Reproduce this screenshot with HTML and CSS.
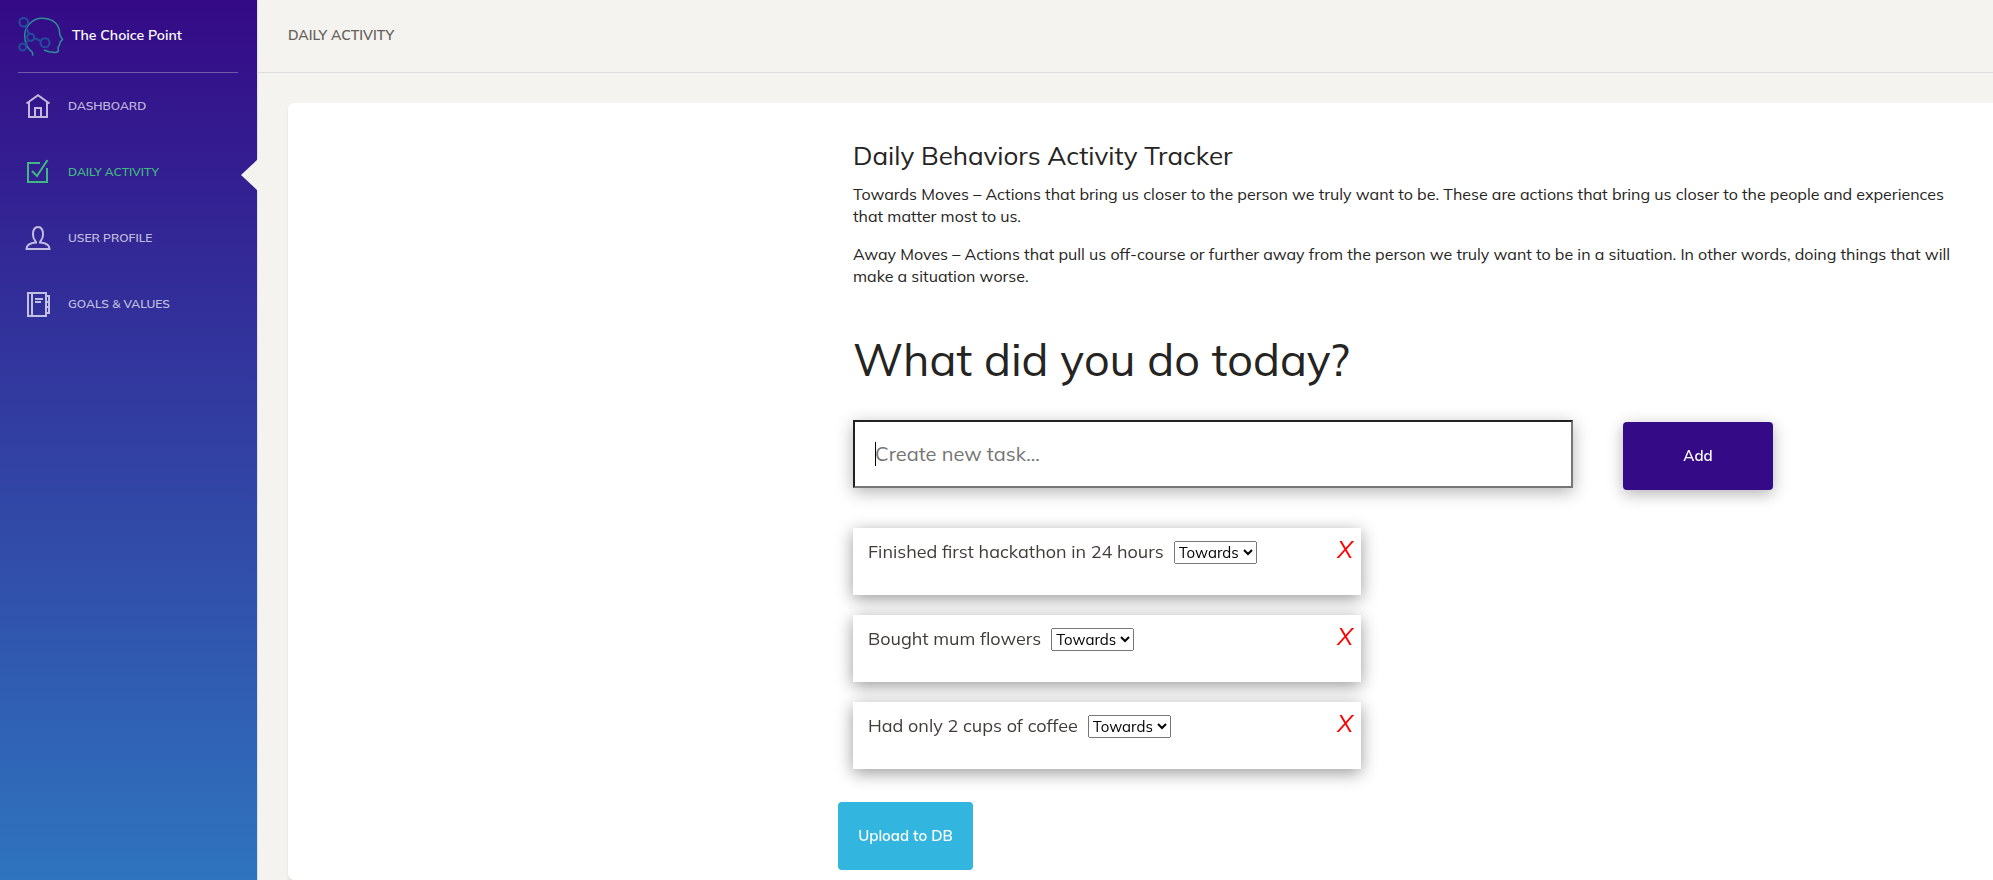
FILE: index.html
```html
<!DOCTYPE html>
<html lang="en">
<head>
  <meta charset="UTF-8" />
  <meta name="viewport" content="width=device-width, initial-scale=1.0" />
  <title>The Choice Point</title>
  <link rel="stylesheet" href="styles.css">
</head>
<body>
  <div class="wrapper">

    <aside class="sidebar">
      <a href="#" class="logo">
        <svg class="logo-img" viewBox="0 0 46 40" fill="none">
          <path stroke="#2b8f94" stroke-width="1.5" d="M14.700 39.700L14.500 36.500L11.500 33.500C8 30 6.700 24 6.700 18.700C7 10 15 2.300 23.700 2.300C32 2.300 39 6 41.300 13.700L41.700 18.700L44.500 23.700L42.300 25.700L41.500 29.300L40 31.300L40.300 34.500C40 36 39 36.500 37 36.400L31 35.700L26 34" />
          <g stroke="#234e9d" stroke-width="2">
            <circle cx="5.700" cy="6.300" r="4.300" />
            <circle cx="12.700" cy="21.300" r="3.500" />
            <circle cx="4.700" cy="31" r="3.500" />
            <circle cx="27" cy="26.700" r="4.500" />
            <path d="M7.500 10l3.500 8M10.500 24l-3.500 4.500M16 22l7 3" />
          </g>
        </svg>
        <span>The Choice Point</span>
      </a>
      <ul class="nav">
        <li><a href="#">
          <svg class="icon" viewBox="0 0 26 26"><path d="M1.500 10.500L13 2.300l11.500 8.200M4 9v15h18V9M10 24v-9h6v9" /></svg>
          Dashboard</a></li>
        <li class="active"><a href="#">
          <svg class="icon" viewBox="0 0 26 26"><path d="M15 4H3v19h19V9M7 12l5 5L22.500 1" /></svg>
          Daily Activity</a></li>
        <li><a href="#">
          <svg class="icon" viewBox="0 0 26 26"><path d="M11 17.500c0-2-3-2-3-8C8 4 10 2 13 2s5 2 5 7.500c0 6-3 6-3 8 6 .5 9.500 2.500 9.500 6.500H1.500c0-4 3.500-6 9.500-6.500z" /></svg>
          User Profile</a></li>
        <li><a href="#">
          <svg class="icon" viewBox="0 0 26 26"><path d="M3 2h18v23H3zM7 2v23M21 5h3v17h-3M10 8h8M10 11h6M22 11h2M22 16h2" /></svg>
          Goals &amp; Values</a></li>
      </ul>
    </aside>

    <div class="main-panel">
      <header class="navbar">
        <a href="#" class="navbar-brand">Daily Activity</a>
      </header>

      <main class="content">
        <section class="card">
          <h2 class="card-title">Daily Behaviors Activity Tracker</h2>
          <p class="card-text">Towards Moves – Actions that bring us closer to the person we truly want to be. These are actions that bring us closer to the people and experiences that matter most to us.</p>
          <p class="card-text">Away Moves – Actions that pull us off-course or further away from the person we truly want to be in a situation. In other words, doing things that will make a situation worse.</p>

          <h1 class="question">What did you do today?</h1>

          <form class="task-form">
            <input class="task-input" type="text" placeholder="Create new task..." aria-label="New task" autofocus>
            <button class="btn btn-add" type="button">Add</button>
          </form>

          <ul class="tasks">
            <li class="task">
              <label for="move1">Finished first hackathon in 24 hours</label>
              <select id="move1"><option>Towards</option><option>Away</option></select>
              <button class="delete" type="button">X</button>
            </li>
            <li class="task">
              <label for="move2">Bought mum flowers</label>
              <select id="move2"><option>Towards</option><option>Away</option></select>
              <button class="delete" type="button">X</button>
            </li>
            <li class="task">
              <label for="move3">Had only 2 cups of coffee</label>
              <select id="move3"><option>Towards</option><option>Away</option></select>
              <button class="delete" type="button">X</button>
            </li>
          </ul>

          <button class="btn btn-upload" type="button">Upload to DB</button>
        </section>
      </main>
    </div>

  </div>
</body>
</html>
```
FILE: styles.css
```css
* {
  box-sizing: border-box;
}

body {
  margin: 0;
  background-color: #f4f3ef;
  color: #252422;
  font-family: Mulish, Muli, Lato, sans-serif;
  font-size: 16px;
  line-height: 22px;
}

a {
  color: inherit;
  text-decoration: none;
}

ul {
  list-style: none;
  margin: 0;
  padding: 0;
}

.wrapper {
  display: flex;
  min-height: 100vh;
}

/* Sidebar */
.sidebar {
  flex: 0 0 258px;
  background: linear-gradient(#340a86, #2f74be);
  border-right: 1px solid #ddd;
  color: white;
}

.logo {
  display: flex;
  align-items: center;
  gap: 8px;
  height: 73px;
  margin: 0 19px 0 18px;
  border-bottom: 1px solid rgba(255, 255, 255, 0.3);
  font-size: 14px;
  font-weight: 600;
  line-height: 20px;
}

.logo span {
  padding-bottom: 2px;
}

.logo-img {
  width: 46px;
  height: 40px;
}

.nav a {
  display: flex;
  align-items: center;
  gap: 17px;
  height: 66px;
  padding-left: 25px;
  color: rgba(255, 255, 255, 0.7);
  font-size: 12px;
  font-weight: 600;
  text-transform: uppercase;
}

.nav .active {
  position: relative;
}

.nav .active a {
  color: #41b883;
}

/* arrow pointing at the open page */
.nav .active::after {
  content: "";
  position: absolute;
  right: -1px;
  top: 20px;
  border: solid transparent;
  border-width: 16px 17px 16px 0;
  border-right-color: #f4f3ef;
}

.icon {
  width: 26px;
  height: 26px;
  fill: none;
  stroke: currentColor;
  stroke-width: 2;
}

/* Main panel */
.main-panel {
  flex: 1;
  min-width: 0;
}

.navbar {
  display: flex;
  align-items: center;
  height: 73px;
  padding: 0 30px 2px;
  border-bottom: 1px solid #ddd;
}

.navbar-brand {
  color: #66615b;
  font-size: 14px;
  font-weight: 600;
  text-transform: uppercase;
}

.content {
  padding: 30px 0 0 30px;
}

.card {
  padding: 35px 36px 10px 565px;
  background: white;
  border-radius: 6px 0 0 6px;
  box-shadow: 0 2px 2px rgba(204, 197, 185, 0.5);
}

.card-title {
  margin: 0 0 9px;
  font-size: 26px;
  font-weight: 400;
  line-height: 36px;
}

.card-text {
  margin: 0 0 16px;
}

.question {
  margin: 42px 0 31px;
  font-size: 45px;
  font-weight: 400;
  line-height: 60px;
}

.task-form {
  display: flex;
  gap: 50px;
}

.task-input {
  width: 720px;
  height: 68px;
  padding: 0 20px 2px;
  border: 2px inset #767676;
  box-shadow: 0 4px 16px rgba(0, 0, 0, 0.3);
  font: inherit;
  font-size: 20px;
  caret-color: transparent;
  outline: none;
}

/* steady caret while the box is empty */
.task-input:placeholder-shown {
  background: linear-gradient(black, black) 20px 20px / 1px 24px no-repeat white;
}

.btn {
  height: 68px;
  border: none;
  border-radius: 4px;
  color: white;
  font: inherit;
  font-size: 15px;
  font-weight: 600;
  cursor: pointer;
}

.btn-add {
  width: 150px;
  margin-top: 2px;
  background: #340a86;
  box-shadow: 0 4px 16px rgba(0, 0, 0, 0.3);
}

.btn-upload {
  width: 135px;
  margin-left: -15px;
  background: #32b5df;
}

.tasks {
  display: grid;
  gap: 20px;
  max-width: 508px;
  margin: 38px 0 33px;
}

.task {
  display: flex;
  align-items: flex-start;
  gap: 10px;
  height: 67px;
  padding: 13px 8px 0 15px;
  background: white;
  box-shadow: 0 4px 16px rgba(0, 0, 0, 0.4);
  color: #403d39;
  font-size: 18px;
}

.task select {
  height: 23px;
  font: inherit;
  font-size: 15px;
}

.delete {
  margin-left: auto;
  padding: 0;
  border: none;
  background: none;
  color: red;
  font: inherit;
  font-size: 24px;
  font-style: italic;
  line-height: 16px;
  cursor: pointer;
}
```
